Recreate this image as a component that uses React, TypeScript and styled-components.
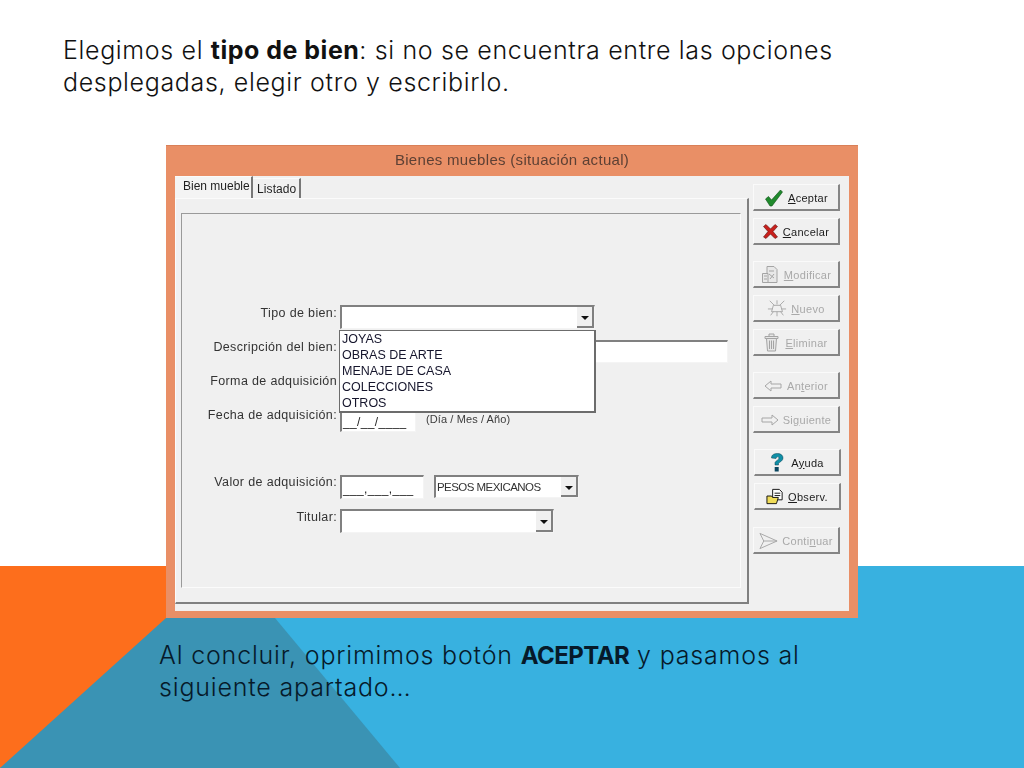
import React from "react";
import styled, { createGlobalStyle } from "styled-components";

const Global = createGlobalStyle`
  html, body { margin: 0; padding: 0; background: #fff; }
  * { box-sizing: border-box; }
`;

const Slide = styled.div`
  position: relative;
  width: 1024px;
  height: 768px;
  overflow: hidden;
  background: #fff;
  font-family: "Inter", "Liberation Sans", sans-serif;
  font-weight: 300;
`;

const Backdrop = styled.svg`
  position: absolute;
  inset: 0;
`;

const Content = styled.div`
  position: relative;
  display: flex;
  flex-direction: column;
  height: 768px;
`;

const Heading = styled.p`
  margin: 35px 0 0 63px;
  height: 110px;
  font-size: 25px;
  line-height: 31.5px;
  letter-spacing: 0.65px;
  color: #111;
  b { font-weight: 700; letter-spacing: 0.5px; }
`;

const Caption = styled.p`
  margin: 22px 0 0 159px;
  font-size: 25px;
  line-height: 31.5px;
  letter-spacing: 0.82px;
  color: #061a2a;
  b { font-weight: 700; font-size: 24px; letter-spacing: -0.55px; }
`;

const Win = styled.div`
  width: 692px;
  height: 473px;
  margin-left: 166px;
  background: #e98f66;
  border-top: 1px solid #d98058;
  display: flex;
  flex-direction: column;
  padding: 0 9px 7px 9px;
  font-family: "Liberation Sans", Arial, sans-serif;
  font-weight: 400;
  filter: blur(0.25px);
`;

const TitleBar = styled.div`
  height: 30px;
  flex: none;
  padding-bottom: 3px;
  display: flex;
  align-items: center;
  justify-content: center;
  font-size: 15px;
  letter-spacing: 0.3px;
  color: #5d4034;
`;

const Client = styled.div`
  flex: 1;
  display: flex;
  background: #f0f0f0;
`;

const TabArea = styled.div`
  width: 574px;
  display: flex;
  flex-direction: column;
`;

const TabStrip = styled.div`
  height: 22px;
  flex: none;
  display: flex;
  font-size: 12px;
  white-space: nowrap;
  color: #1f1f1f;
`;

const Tab = styled.div<{ $active?: boolean }>`
  height: ${(p) => (p.$active ? 23 : 20)}px;
  margin-top: ${(p) => (p.$active ? 0 : 2)}px;
  padding: ${(p) => (p.$active ? "2px 0 0 8px" : "3px 0 0 4px")};
  border-right: 2px solid #777;
  background: ${(p) => (p.$active ? "#f4f4f4" : "#f0f0f0")};
  border-top: 1px solid #fafafa;
  letter-spacing: ${(p) => (p.$active ? "0" : "0.1px")};
  width: ${(p) => (p.$active ? 78 : 48)}px;
`;

const TabBody = styled.div`
  flex: 1;
  margin-bottom: 7px;
  padding: 14px 6px 14px 5px;
  border-top: 1px solid #fbfbfb;
  border-left: 1px solid #fbfbfb;
  border-right: 2px solid #808080;
  border-bottom: 2px solid #808080;
  display: flex;
`;

const Group = styled.div`
  flex: 1;
  border-top: 1px solid #9a9a9a;
  border-left: 1px solid #9a9a9a;
  border-right: 1px solid #fbfbfb;
  border-bottom: 1px solid #fbfbfb;
  display: flex;
  flex-direction: column;
  padding-top: 91px;
  position: relative;
`;

const Row = styled.div<{ $top?: number }>`
  display: flex;
  align-items: flex-start;
  margin-top: ${(p) => p.$top ?? 0}px;
`;

const Label = styled.div<{ $drop?: boolean }>`
  width: 155px;
  padding-top: ${(p) => (p.$drop ? 1 : 0)}px;
  text-align: right;
  margin-right: 3px;
  font-size: 12.5px;
  line-height: 14px;
  letter-spacing: 0.36px;
  white-space: nowrap;
  color: #333;
`;

const Field = styled.div<{ $w: number; $h?: number; $gap?: number }>`
  width: ${(p) => p.$w}px;
  height: ${(p) => p.$h ?? 24}px;
  margin-left: ${(p) => p.$gap ?? 0}px;
  background: #fff;
  border-top: 2px solid #808080;
  border-left: 2px solid #808080;
  border-right: 1px solid #f4f4f4;
  border-bottom: 1px solid #f4f4f4;
  display: flex;
  align-items: flex-end;
  justify-content: space-between;
  font-size: 11px;
  color: #222;
`;

const Mask = styled.span`
  padding: 0 0 2px 1px;
  font-size: 12px;
  line-height: 14px;
  letter-spacing: 0.35px;
  white-space: nowrap;
  color: #222;
`;

const DropButton = styled.div`
  width: 17px;
  height: 100%;
  background: #f0f0f0;
  border-right: 2px solid #808080;
  border-bottom: 2px solid #808080;
  display: flex;
  align-items: center;
  justify-content: center;
  &::before {
    content: "";
    border-left: 4px solid transparent;
    border-right: 4px solid transparent;
    border-top: 4px solid #111;
    margin-top: 3px;
  }
`;

const Currency = styled.span`
  align-self: center;
  padding-left: 1px;
  font-size: 11.5px;
  letter-spacing: -0.55px;
  white-space: nowrap;
  color: #333;
`;

const Hint = styled.span`
  margin: 4px 0 0 10px;
  font-size: 11px;
  line-height: 14px;
  letter-spacing: 0.1px;
  white-space: nowrap;
  color: #3c3c3c;
`;

const List = styled.div`
  position: absolute;
  left: 157px;
  top: 116px;
  width: 257px;
  height: 83px;
  background: #fff;
  border: 1px solid #6c6c6c;
  border-width: 1px 2px 2px 1px;
  padding: 0 0 0 2px;
  font-size: 12.5px;
  line-height: 16px;
  color: #15152c;
`;

const ButtonColumn = styled.div`
  display: flex;
  flex-direction: column;
  padding: 8px 0 0 4px;
`;

const Btn = styled.div<{ $top?: number; $off?: boolean; $shift?: number; $gap?: number }>`
  width: 87px;
  height: 27px;
  flex: none;
  margin-top: ${(p) => p.$top ?? 0}px;
  margin-left: ${(p) => p.$shift ?? 0}px;
  padding-top: 1px;
  background: #f0f0f0;
  border-top: 1px solid #fafafa;
  border-left: 1px solid #fafafa;
  border-right: 2px solid #858585;
  border-bottom: 2px solid #858585;
  display: flex;
  align-items: center;
  justify-content: center;
  gap: ${(p) => p.$gap ?? 4}px;
  font-size: 11px;
  letter-spacing: 0.3px;
  color: ${(p) => (p.$off ? "#a9a9a9" : "#1c1c1c")};
  u { text-underline-offset: 1px; }
  svg { flex: none; }
`;

const Check = () => (
  <svg width="20" height="18" viewBox="0 0 19 18">
    <path d="M1 10 L4 7.5 L7 11 L16 1 L18 3 L7.5 17 L5.5 17 Z" fill="#1f8a2c" stroke="#0c4d16" strokeWidth="0.6" />
  </svg>
);
const Cross = () => (
  <svg width="15" height="15" viewBox="0 0 15 15">
    <path d="M0.5 2.5 L3 0.5 L7.5 5 L12 0.5 L14.5 2.5 L10 7.5 L14.5 13 L12 14.5 L7.5 10 L3 14.5 L0.5 13 L5 7.5 Z" fill="#c9201c" stroke="#5a1010" strokeWidth="0.6" />
  </svg>
);
const EditDoc = () => (
  <svg width="19" height="19" viewBox="0 0 19 19" fill="#e8e8e8" stroke="#a4a4a4" strokeWidth="1">
    <path d="M6 1.5 H13 L16 4.5 V17.5 H6 Z" />
    <path d="M1.5 8.5 H7 V17.5 H1.5 Z" />
    <path d="M8 6 H13 M8 9 L13 13 M13 9 L9 14 M3 11 H6 M3 14 H6" fill="none" />
  </svg>
);
const Burst = () => (
  <svg width="20" height="19" viewBox="0 0 22 19" fill="none" stroke="#a4a4a4" strokeWidth="1">
    <path d="M7 6 H15 L17 13 H5 Z" />
    <path d="M3 1 L8 6 M11 0.5 V5 M19 1 L14 6 M1 10 H6 M16 10 H21 M4 17 L7 13 M18 17 L15 13 M11 13 V18" />
  </svg>
);
const Trash = () => (
  <svg width="15" height="19" viewBox="0 0 15 19" fill="#e6e6e6" stroke="#a4a4a4" strokeWidth="1">
    <path d="M5 3 V1 H10 V3 M1 3.5 H14 V5.5 H1 Z" />
    <path d="M2.5 5.5 H12.5 L11.5 18 H3.5 Z" />
    <path d="M5.5 7.5 V16 M7.5 7.5 V16 M9.5 7.5 V16" fill="none" />
  </svg>
);
const ArrowLeft = () => (
  <svg width="18" height="12" viewBox="0 0 18 12" fill="none" stroke="#a6a6a6" strokeWidth="1">
    <path d="M1 6 L7 1 V4 H17 V8 H7 V11 Z" />
  </svg>
);
const ArrowRight = () => (
  <svg width="18" height="12" viewBox="0 0 18 12" fill="none" stroke="#a6a6a6" strokeWidth="1">
    <path d="M17 6 L11 1 V4 H1 V8 H11 V11 Z" />
  </svg>
);
const Help = () => (
  <svg width="14" height="19" viewBox="0 0 13 19">
    <path d="M1 5 C1 1.5 4 0.5 7 0.5 C10.5 0.5 12.5 2.5 12.5 5 C12.5 8 9.5 8.5 8 10.5 L8 12 H4.5 L4.5 9.5 C5.5 7.5 8.5 6.8 8.5 5 C8.5 3.5 6 3.2 5.5 5.5 Z" fill="#0f8fa6" stroke="#0a3e52" strokeWidth="0.5" />
    <rect x="4.2" y="14" width="4" height="4.5" fill="#0a4660" />
  </svg>
);
const FolderDoc = () => (
  <svg width="19" height="17" viewBox="0 0 20 17" stroke="#111" strokeWidth="1">
    <path d="M7 1 H14 L17 4 V12 H7 Z" fill="#fff" />
    <path d="M9 5 H15 M9 7.5 H15" fill="none" />
    <path d="M1 8 H6 L7 9.5 H13 L11 16 H1 Z" fill="#f0dc58" />
  </svg>
);
const Plane = () => (
  <svg width="19" height="18" viewBox="0 0 20 18" fill="none" stroke="#a6a6a6" strokeWidth="1">
    <path d="M1 1 L19 9 L1 17 L5 9 Z M5 9 H19" />
  </svg>
);

export default function App() {
  return (
    <Slide>
      <Global />
      <Backdrop width="1024" height="768" viewBox="0 0 1024 768">
        <rect x="0" y="566" width="1024" height="202" fill="#38b1e0" />
        <polygon points="0,566 300,566 0,768" fill="#fd6e1c" />
        <polygon points="0,768 166,618 275,618 400,768" fill="#3a93b4" />
      </Backdrop>
      <Content>
        <Heading>
          Elegimos el <b>tipo de bien</b>: si no se encuentra entre las opciones
          <br />
          desplegadas, elegir otro y escribirlo.
        </Heading>
        <Win>
          <TitleBar>Bienes muebles (situación actual)</TitleBar>
          <Client>
            <TabArea>
              <TabStrip>
                <Tab $active>Bien mueble</Tab>
                <Tab>Listado</Tab>
              </TabStrip>
              <TabBody>
                <Group>
                  <Row>
                    <Label $drop>Tipo de bien:</Label>
                    <Field $w={255}>
                      <span />
                      <DropButton />
                    </Field>
                  </Row>
                  <Row $top={11}>
                    <Label>Descripción del bien:</Label>
                    <Field $w={388} $h={23} />
                  </Row>
                  <Row $top={11}>
                    <Label>Forma de adquisición</Label>
                  </Row>
                  <Row $top={20}>
                    <Label>Fecha de adquisición:</Label>
                    <Field $w={76}>
                      <Mask>__/__/____</Mask>
                    </Field>
                    <Hint>(Día / Mes / Año)</Hint>
                  </Row>
                  <Row $top={43}>
                    <Label>Valor de adquisición:</Label>
                    <Field $w={84}>
                      <Mask>___,___,___</Mask>
                    </Field>
                    <Field $w={145} $h={23} $gap={10}>
                      <Currency>PESOS MEXICANOS</Currency>
                      <DropButton />
                    </Field>
                  </Row>
                  <Row $top={10}>
                    <Label $drop>Titular:</Label>
                    <Field $w={214}>
                      <span />
                      <DropButton />
                    </Field>
                  </Row>
                  <List>
                    <div>JOYAS</div>
                    <div>OBRAS DE ARTE</div>
                    <div>MENAJE DE CASA</div>
                    <div>COLECCIONES</div>
                    <div>OTROS</div>
                  </List>
                </Group>
              </TabBody>
            </TabArea>
            <ButtonColumn>
              <Btn><Check /><span><u>A</u>ceptar</span></Btn>
              <Btn $top={7} $gap={5}><Cross /><span><u>C</u>ancelar</span></Btn>
              <Btn $top={16} $off><EditDoc /><span><u>M</u>odificar</span></Btn>
              <Btn $top={7} $off><Burst /><span><u>N</u>uevo</span></Btn>
              <Btn $top={7} $off $gap={6}><Trash /><span><u>E</u>liminar</span></Btn>
              <Btn $top={16} $off $gap={5}><ArrowLeft /><span>An<u>t</u>erior</span></Btn>
              <Btn $top={7} $off><ArrowRight /><span>Si<u>g</u>uiente</span></Btn>
              <Btn $top={16} $shift={1} $gap={7}><Help /><span>A<u>y</u>uda</span></Btn>
              <Btn $top={7} $shift={1} $gap={3}><FolderDoc /><span><u>O</u>bserv.</span></Btn>
              <Btn $top={17} $off><Plane /><span>Conti<u>n</u>uar</span></Btn>
            </ButtonColumn>
          </Client>
        </Win>
        <Caption>
          Al concluir, oprimimos botón <b>ACEPTAR</b> y pasamos al
          <br />
          siguiente apartado…
        </Caption>
      </Content>
    </Slide>
  );
}
